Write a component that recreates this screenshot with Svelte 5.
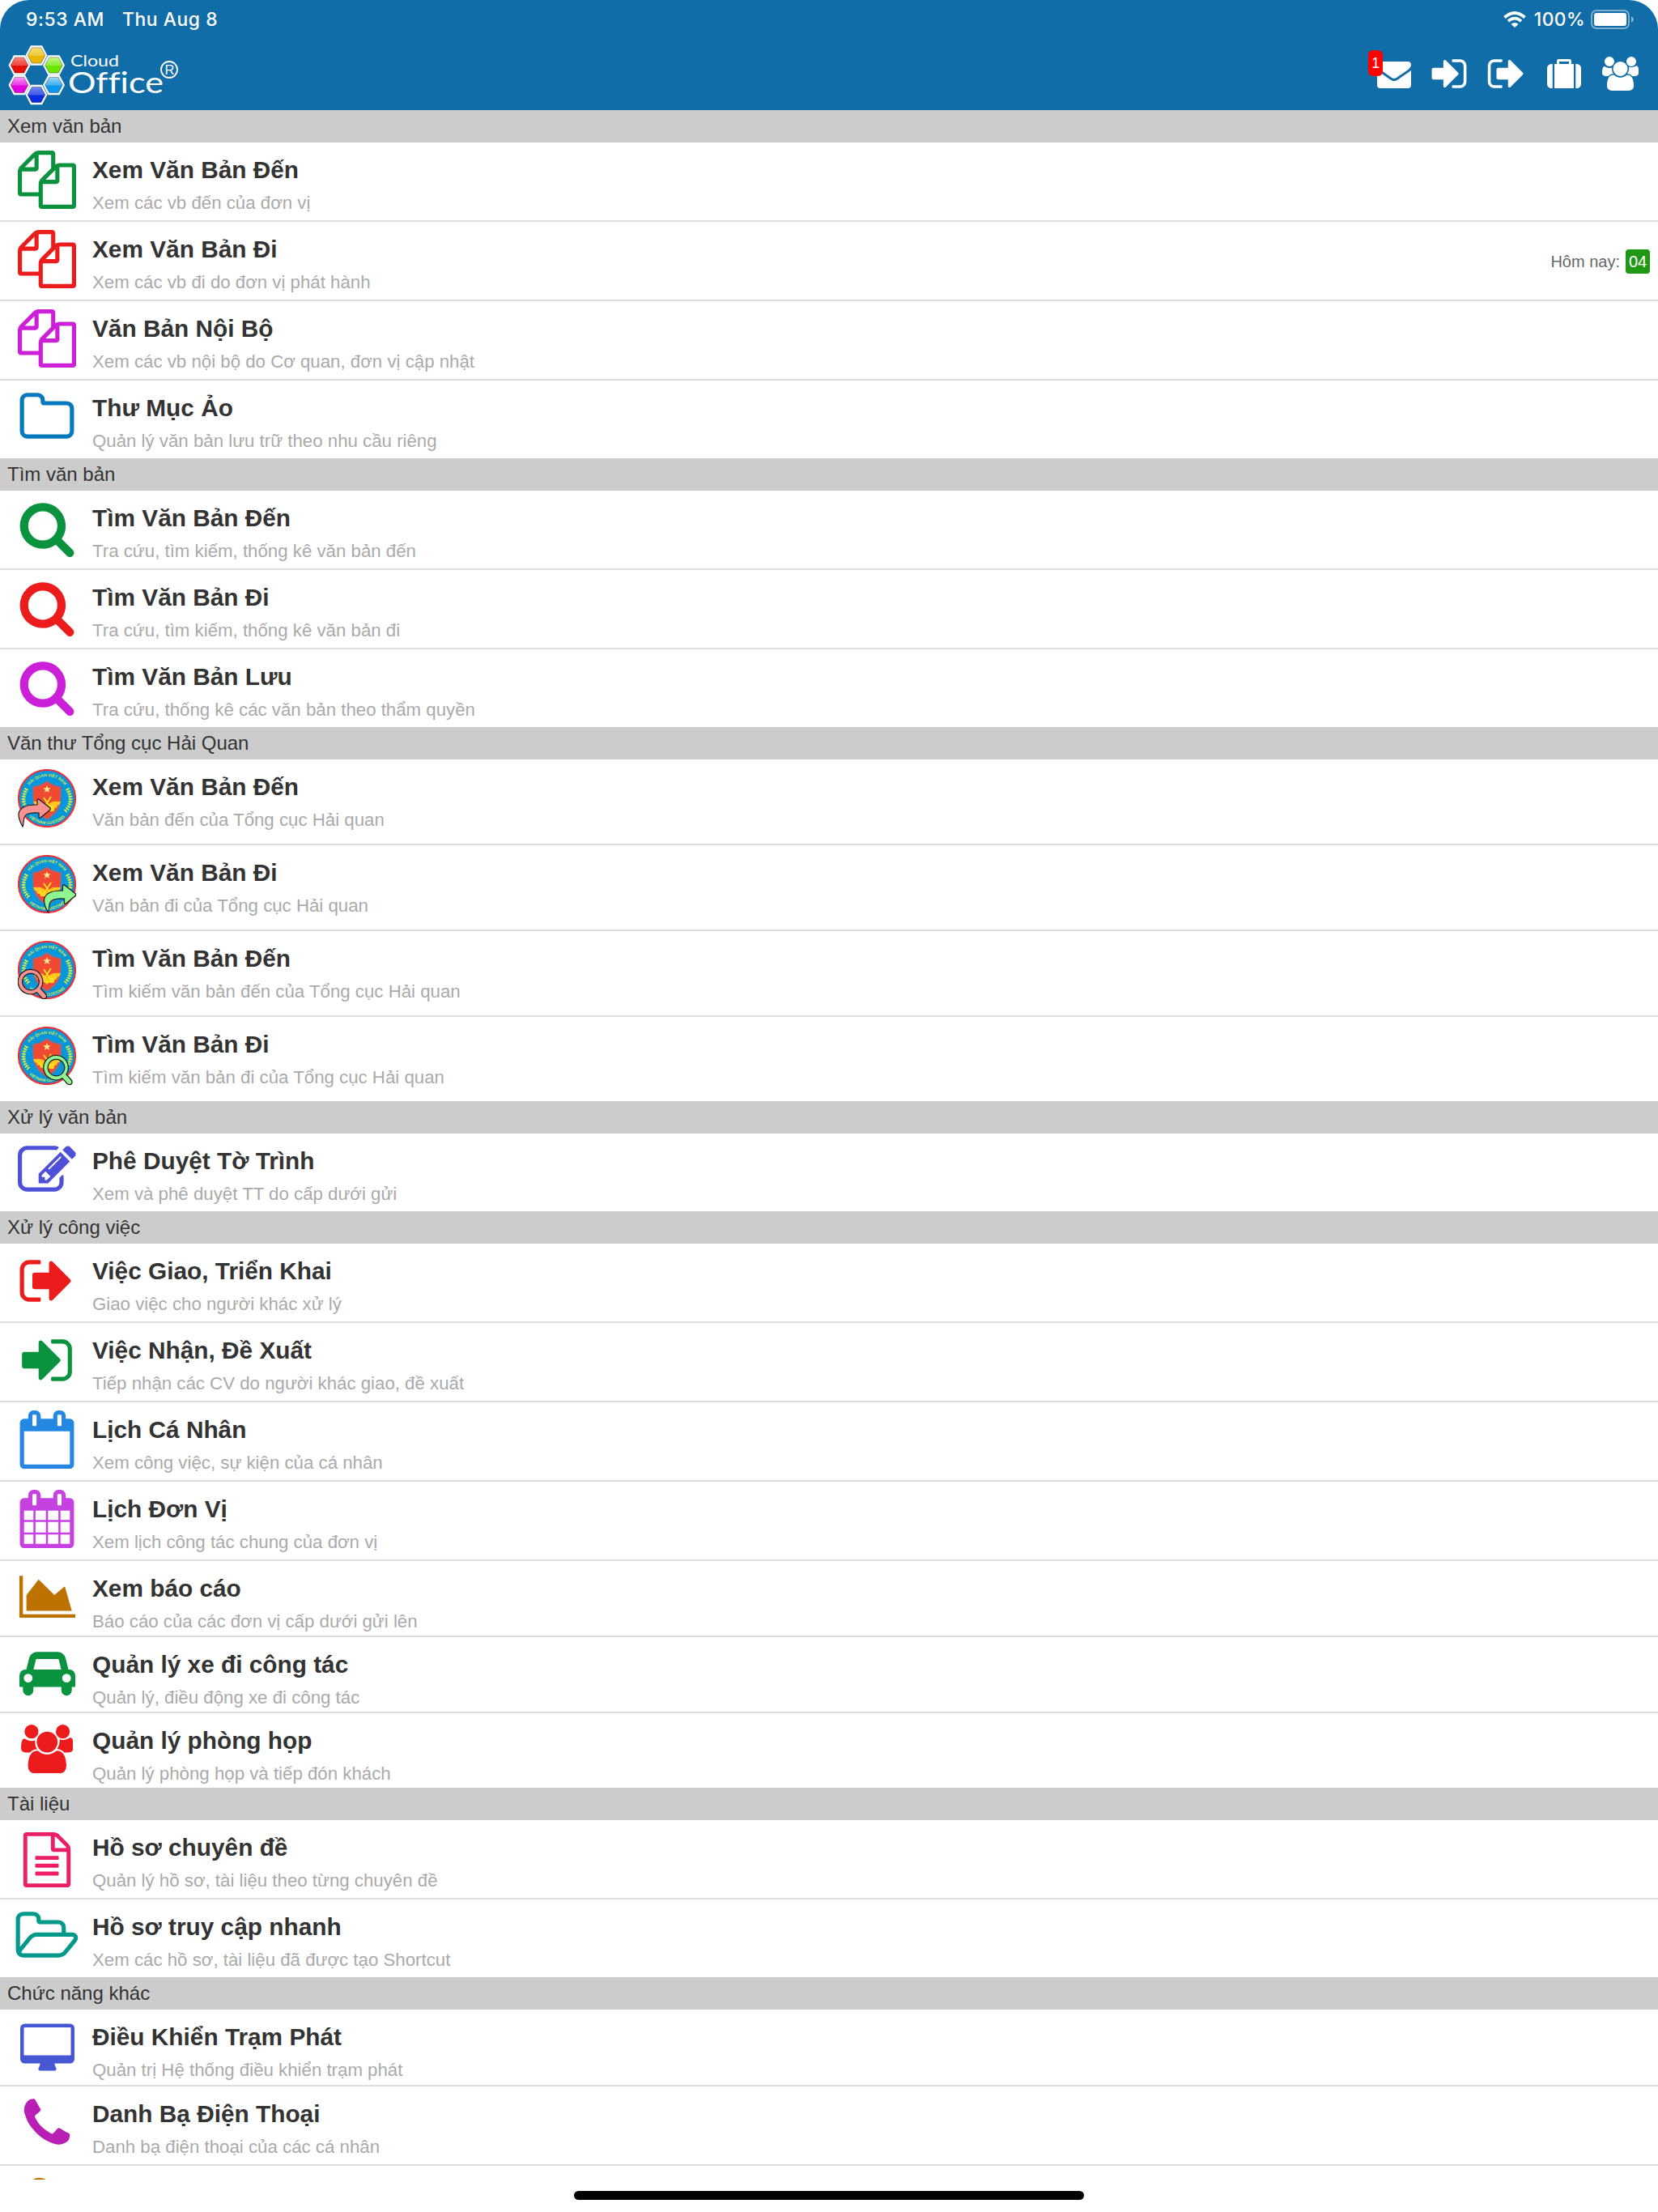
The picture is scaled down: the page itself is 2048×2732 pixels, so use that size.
<script>
  const icons = {
    files: {
      box: "0 0 1792 1792",
      d: "M1696 384q40 0 68 28t28 68v1216q0 40-28 68t-68 28h-960q-40 0-68-28t-28-68v-288h-544q-40 0-68-28t-28-68v-672q0-40 20-88t48-76l408-408q28-28 76-48t88-20h416q40 0 68 28t28 68v328q68-40 128-40h416zm-544 213l-299 299h299v-299zm-640-384l-299 299h299v-299zm196 647l316-316v-416h-384v416q0 40-28 68t-68 28h-416v640h512v-256q0-40 20-88t48-76zm956 804v-1152h-384v416q0 40-28 68t-68 28h-416v640h896z"
    },
    folder: {
      box: "0 0 1792 1792",
      d: "M1600 1312v-704q0-40-28-68t-68-28h-704q-40 0-68-28t-28-68v-64q0-40-28-68t-68-28h-320q-40 0-68 28t-28 68v960q0 40 28 68t68 28h1216q40 0 68-28t28-68zm128-704v704q0 92-66 158t-158 66h-1216q-92 0-158-66t-66-158v-960q0-92 66-158t158-66h320q92 0 158 66t66 158v32h672q92 0 158 66t66 158z"
    },
    search: {
      box: "0 0 1792 1792",
      d: "M1216 832q0-185-131.500-316.500t-316.500-131.500-316.500 131.500-131.500 316.500 131.500 316.500 316.500 131.500 316.500-131.500 131.500-316.500zm512 832q0 52-38 90t-90 38q-54 0-90-38l-343-342q-179 124-399 124-143 0-273.500-55.500t-225-150-150-225-55.500-273.500 55.500-273.500 150-225 225-150 273.500-55.500 273.500 55.500 225 150 150 225 55.500 273.500q0 220-124 399l343 343q37 37 37 90z"
    },
    edit: {
      box: "0 0 1792 1792",
      d: "M888 1184l116-116-152-152-116 116v56h96v96h56zm440-720q-16-16-33 1l-350 350q-17 17-1 33t33-1l350-350q17-17 1-33zm80 594v190q0 119-84.500 203.500t-203.500 84.500h-832q-119 0-203.500-84.500t-84.500-203.500v-832q0-119 84.500-203.500t203.500-84.500h832q63 0 117 25 15 7 18 23 3 17-9 29l-49 49q-14 14-32 8-23-6-45-6h-832q-66 0-113 47t-47 113v832q0 66 47 113t113 47h832q66 0 113-47t47-113v-126q0-13 9-22l64-64q15-15 35-7t20 29zm-96-738l288 288-672 672h-288v-288zm444 132l-92 92-288-288 92-92q28-28 68-28t68 28l152 152q28 28 28 68t-28 68z"
    },
    signOut: {
      box: "0 0 1792 1792",
      d: "M704 1440q0 4 1 20t.5 26.500-3 23.500-10 19.500-20.500 6.500h-320q-119 0-203.500-84.500t-84.500-203.500v-704q0-119 84.500-203.500t203.500-84.500h320q13 0 22.500 9.500t9.500 22.500q0 4 1 20t.5 26.500-3 23.500-10 19.500-20.500 6.500h-320q-66 0-113 47t-47 113v704q0 66 47 113t113 47h312l11.500 1 11.500 3 8 5.500 7 9 2 13.500zm928-544q0 26-19 45l-544 544q-19 19-45 19t-45-19-19-45v-288h-448q-26 0-45-19t-19-45v-384q0-26 19-45t45-19h448v-288q0-26 19-45t45-19 45 19l544 544q19 19 19 45z"
    },
    signIn: {
      box: "0 0 1792 1792",
      d: "M1312 896q0 26-19 45l-544 544q-19 19-45 19t-45-19-19-45v-288h-448q-26 0-45-19t-19-45v-384q0-26 19-45t45-19h448v-288q0-26 19-45t45-19 45 19l544 544q19 19 19 45zm352-352v704q0 119-84.500 203.500t-203.500 84.500h-320q-13 0-22.500-9.500t-9.500-22.500q0-4-1-20t-.5-26.500 3-23.500 10-19.500 20.500-6.500h320q66 0 113-47t47-113v-704q0-66-47-113t-113-47h-312l-11.500-1-11.500-3-8-5.500-7-9-2-13.500q0-4-1-20t-.5-26.500 3-23.500 10-19.500 20.500-6.500h320q119 0 203.500 84.500t84.500 203.500z"
    },
    calendarBlank: {
      box: "0 0 1792 1792",
      d: "M192 1664h1408v-1024h-1408v1024zm384-1216v-288q0-13-9.500-22.500t-22.500-9.500h-64q-13 0-22.500 9.500t-9.500 22.500v288q0 13 9.500 22.500t22.500 9.500h64q13 0 22.500-9.500t9.500-22.500zm768 0v-288q0-13-9.500-22.500t-22.500-9.500h-64q-13 0-22.500 9.500t-9.500 22.500v288q0 13 9.500 22.500t22.500 9.500h64q13 0 22.500-9.500t9.500-22.500zm384-64v1280q0 52-38 90t-90 38h-1408q-52 0-90-38t-38-90v-1280q0-52 38-90t90-38h128v-96q0-66 47-113t113-47h64q66 0 113 47t47 113v96h384v-96q0-66 47-113t113-47h64q66 0 113 47t47 113v96h128q52 0 90 38t38 90z"
    },
    calendar: {
      box: "0 0 1792 1792",
      d: "M192 1664h288v-288h-288v288zm352 0h320v-288h-320v288zm-352-352h288v-320h-288v320zm352 0h320v-320h-320v320zm-352-384h288v-288h-288v288zm736 736h320v-288h-320v288zm-384-736h320v-288h-320v288zm768 736h288v-288h-288v288zm-384-352h320v-320h-320v320zm-352-864v-288q0-13-9.500-22.500t-22.500-9.500h-64q-13 0-22.500 9.500t-9.500 22.500v288q0 13 9.500 22.500t22.500 9.500h64q13 0 22.500-9.500t9.500-22.500zm736 864h288v-320h-288v320zm-384-384h320v-288h-320v288zm384 0h288v-288h-288v288zm32-480v-288q0-13-9.500-22.500t-22.500-9.500h-64q-13 0-22.500 9.500t-9.500 22.500v288q0 13 9.500 22.500t22.500 9.500h64q13 0 22.500-9.500t9.500-22.500zm384-64v1280q0 52-38 90t-90 38h-1408q-52 0-90-38t-38-90v-1280q0-52 38-90t90-38h128v-96q0-66 47-113t113-47h64q66 0 113 47t47 113v96h384v-96q0-66 47-113t113-47h64q66 0 113 47t47 113v96h128q52 0 90 38t38 90z"
    },
    chart: {
      box: "0 0 2048 1792",
      d: "M2048 1536v128h-2048v-1536h128v1408h1920zm-384-1024l256 896h-1664v-576l448-576 576 576z"
    },
    car: {
      box: "0 0 2048 1792",
      d: "M480 1088q0-66-47-113t-113-47-113 47-47 113 47 113 113 47 113-47 47-113zm36-320h1016l-89-357q-2-8-14-17.500t-21-9.500h-768q-9 0-21 9.500t-14 17.500zm1372 320q0-66-47-113t-113-47-113 47-47 113 47 113 113 47 113-47 47-113zm160-96v384q0 14-9 23t-23 9h-96v128q0 80-56 136t-136 56-136-56-56-136v-128h-1024v128q0 80-56 136t-136 56-136-56-56-136v-128h-96q-14 0-23-9t-9-23v-384q0-93 65.500-158.500t158.500-65.500h28l105-419q23-94 104-157.500t179-63.500h768q98 0 179 63.500t104 157.500l105 419h28q93 0 158.500 65.500t65.500 158.500z"
    },
    users: {
      box: "0 0 1920 1792",
      d: "M593 896q-162 5-265 128h-134q-82 0-138-40.500t-56-118.500q0-353 124-353 6 0 43.500 21t97.500 42.500 119 21.500q67 0 133-23-5 37-5 66 0 159 93 293zm1071 637q0 120-73 189.500t-194 69.500h-874q-121 0-194-69.500t-73-189.500q0-53 3.500-103.500t14-109 26.500-108.500 43-97.500 62-81 85.500-53.500 111.500-20q10 0 43 21.500t73 48 107 48 135 21.500 135-21.500 107-48 73-48 43-21.500q61 0 111.500 20t85.500 53.500 62 81 43 97.500 26.500 108.500 14 109 3.500 103.500zm-1024-1277q0 106-75 181t-181 75-181-75-75-181 75-181 181-75 181 75 75 181zm704 384q0 159-112.500 271.500t-271.500 112.500-271.500-112.500-112.500-271.500 112.500-271.500 271.500-112.500 271.500 112.500 112.500 271.500zm576 225q0 78-56 118.500t-138 40.500h-134q-103-123-265-128 93-134 93-293 0-29-5-66 66 23 133 23 59 0 119-21.500t97.500-42.500 43.500-21q124 0 124 353zm-128-609q0 106-75 181t-181 75-181-75-75-181 75-181 181-75 181 75 75 181z"
    },
    file: {
      box: "0 0 1536 1792",
      d: "M1468 380q28 28 48 76t20 88v1152q0 40-28 68t-68 28h-1344q-40 0-68-28t-28-68v-1600q0-40 28-68t68-28h896q40 0 88 20t76 48zm-444-244v376h376q-10-29-22-41l-313-313q-12-12-41-22zm384 1528v-1024h-416q-40 0-68-28t-28-68v-416h-768v1536h1280zm-1024-864q0-14 9-23t23-9h704q14 0 23 9t9 23v64q0 14-9 23t-23 9h-704q-14 0-23-9t-9-23v-64zm736 224q14 0 23 9t9 23v64q0 14-9 23t-23 9h-704q-14 0-23-9t-9-23v-64q0-14 9-23t23-9h704zm0 256q14 0 23 9t9 23v64q0 14-9 23t-23 9h-704q-14 0-23-9t-9-23v-64q0-14 9-23t23-9h704z"
    },
    folderOpen: {
      box: "0 0 2048 1792",
      d: "M1845 931q0-35-53-35h-1088q-40 0-85.500 21.500t-71.500 52.500l-294 363q-18 24-18 40 0 35 53 35h1088q40 0 86-22t71-53l294-363q18-22 18-39zm-1141-163h768v-160q0-40-28-68t-68-28h-576q-40 0-68-28t-28-68v-64q0-40-28-68t-68-28h-320q-40 0-68 28t-28 68v853l256-315q44-53 116-87.500t140-34.500zm1269 163q0 62-46 120l-295 363q-43 53-116 87.500t-140 34.500h-1088q-92 0-158-66t-66-158v-960q0-92 66-158t158-66h320q92 0 158 66t66 158v32h544q92 0 158 66t66 158v160h192q54 0 99 24.500t67 70.500q15 32 15 68z"
    },
    desktop: {
      box: "0 0 1920 1664",
      d: "M1792 1088v-928q0-13-9.500-22.500t-22.500-9.500h-1600q-13 0-22.500 9.500t-9.500 22.500v928q0 13 9.500 22.500t22.500 9.500h1600q13 0 22.500-9.500t9.500-22.500zm128-928v1088q0 66-47 113t-113 47h-544q0 37 16 77.500t32 71 16 43.500q0 26-19 45t-45 19h-512q-26 0-45-19t-19-45q0-14 16-44t32-70 16-78h-544q-66 0-113-47t-47-113v-1088q0-66 47-113t113-47h1600q66 0 113 47t47 113z"
    },
    phone: {
      box: "0 0 1792 1792",
      d: "M1600 1240q0 27-10 70.500t-21 68.500q-21 50-122 106-94 51-186 51-27 0-53-3.500t-57.500-12.500-47-14.500-55.500-20.500-49-18q-98-35-175-83-127-79-264-216t-216-264q-48-77-83-175-3-9-18-49t-20.500-55.500-14.500-47-12.500-57.500-3.500-53q0-92 51-186 56-101 106-122 25-11 68.500-21t70.500-10q14 0 21 3 18 6 53 76 11 19 30 54t35 63.500 31 53.500q3 4 17.500 25t21.500 35.500 7 28.500q0 20-28.500 50t-62 55-62 53-28.500 46q0 9 5 22.500t8.500 20.500 14 24 11.500 19q76 137 174 235t235 174q2 1 19 11.500t24 14 20.500 8.500 22.500 5q18 0 46-28.500t53-62 55-62 50-28.500q14 0 28.500 7t35.500 21.500 25 17.500q25 15 53.500 31t63.500 35 54 30q70 35 76 53 3 7 3 21z"
    },
    envelope: {
      box: "0 0 1792 1792",
      d: "M1792 710v794q0 66-47 113t-113 47h-1472q-66 0-113-47t-47-113v-794q44 49 101 87 362 246 497 345 57 42 92.500 65.500t94.500 48 110 24.500h2q51 0 110-24.500t94.500-48 92.500-65.500q170-123 498-345 57-39 100-87zm0-294q0 79-49 151t-122 123q-376 261-468 325-10 7-42.500 31t-54 38.500-52 32.500-57.500 27-50 9h-2q-23 0-50-9t-57.500-27-52-32.500-54-38.500-42.500-31q-91-64-262-182.500t-205-142.500q-62-42-117-115.500t-55-136.500q0-78 41.500-130t118.500-52h1472q65 0 112.500 47t47.500 113z"
    },
    suitcase: {
      box: "0 0 1792 1792",
      d: "M640 384h512v-128h-512v128zm-352 0v1280h-64q-92 0-158-66t-66-158v-832q0-92 66-158t158-66h64zm1120 0v1280h-1024v-1280h128v-160q0-40 28-68t68-28h576q40 0 68 28t28 68v160h128zm384 224v832q0 92-66 158t-158 66h-64v-1280h64q92 0 158 66t66 158z"
    },
    key: {
      box: "0 0 1792 1792",
      d: "M660 118a400 400 0 1 0 1 0z"
    }
  };

  const sections = [
    {
      name: "Xem văn bản",
      items: [
        { icon: "files", color: "#0b923f", title: "Xem Văn Bản Đến", note: "Xem các vb đến của đơn vị" },
        { icon: "files", color: "#ec1c1c", title: "Xem Văn Bản Đi", note: "Xem các vb đi do đơn vị phát hành", today: "04" },
        { icon: "files", color: "#cc1fd8", title: "Văn Bản Nội Bộ", note: "Xem các vb nội bộ do Cơ quan, đơn vị cập nhật" },
        { icon: "folder", color: "#0479bd", title: "Thư Mục Ảo", note: "Quản lý văn bản lưu trữ theo nhu cầu riêng" }
      ]
    },
    {
      name: "Tìm văn bản",
      items: [
        { icon: "search", color: "#0b923f", title: "Tìm Văn Bản Đến", note: "Tra cứu, tìm kiếm, thống kê văn bản đến" },
        { icon: "search", color: "#ec1c1c", title: "Tìm Văn Bản Đi", note: "Tra cứu, tìm kiếm, thống kê văn bản đi" },
        { icon: "search", color: "#cc1fd8", title: "Tìm Văn Bản Lưu", note: "Tra cứu, thống kê các văn bản theo thẩm quyền" }
      ]
    },
    {
      name: "Văn thư Tổng cục Hải Quan",
      items: [
        { emblem: "arrow", side: "in", title: "Xem Văn Bản Đến", note: "Văn bản đến của Tổng cục Hải quan" },
        { emblem: "arrow", side: "out", title: "Xem Văn Bản Đi", note: "Văn bản đi của Tổng cục Hải quan" },
        { emblem: "lens", side: "in", title: "Tìm Văn Bản Đến", note: "Tìm kiếm văn bản đến của Tổng cục Hải quan" },
        { emblem: "lens", side: "out", title: "Tìm Văn Bản Đi", note: "Tìm kiếm văn bản đi của Tổng cục Hải quan" }
      ]
    },
    {
      name: "Xử lý văn bản",
      items: [
        { icon: "edit", color: "#4e51d8", title: "Phê Duyệt Tờ Trình", note: "Xem và phê duyệt TT do cấp dưới gửi" }
      ]
    },
    {
      name: "Xử lý công việc",
      items: [
        { icon: "signOut", color: "#ec1c1c", title: "Việc Giao, Triển Khai", note: "Giao việc cho người khác xử lý" },
        { icon: "signIn", color: "#0b923f", title: "Việc Nhận, Đề Xuất", note: "Tiếp nhận các CV do người khác giao, đề xuất" },
        { icon: "calendarBlank", color: "#2487e2", title: "Lịch Cá Nhân", note: "Xem công việc, sự kiện của cá nhân" },
        { icon: "calendar", color: "#c642e0", title: "Lịch Đơn Vị", note: "Xem lịch công tác chung của đơn vị" },
        { icon: "chart", size: "short", color: "#bd7200", title: "Xem báo cáo", note: "Báo cáo của các đơn vị cấp dưới gửi lên" },
        { icon: "car", size: "short", color: "#0b923f", title: "Quản lý xe đi công tác", note: "Quản lý, điều động xe đi công tác" },
        { icon: "users", size: "short", color: "#ec1c1c", title: "Quản lý phòng họp", note: "Quản lý phòng họp và tiếp đón khách" }
      ]
    },
    {
      name: "Tài liệu",
      items: [
        { icon: "file", size: "doc", color: "#ec1f66", title: "Hồ sơ chuyên đề", note: "Quản lý hồ sơ, tài liệu theo từng chuyên đề" },
        { icon: "folderOpen", color: "#03998a", title: "Hồ sơ truy cập nhanh", note: "Xem các hồ sơ, tài liệu đã được tạo Shortcut" }
      ]
    },
    {
      name: "Chức năng khác",
      items: [
        { icon: "desktop", size: "wide", color: "#4657d4", title: "Điều Khiển Trạm Phát", note: "Quản trị Hệ thống điều khiển trạm phát" },
        { icon: "phone", color: "#b81fb4", title: "Danh Bạ Điện Thoại", note: "Danh bạ điện thoại của các cá nhân" },
        { icon: "key", color: "#bd7200", title: "", note: "" }
      ]
    }
  ];

  const cells = [
    { x: 39, y: 12.5, from: "#fbe27a", to: "#e8b800" },
    { x: 60.5, y: 24.5, from: "#c9ff8a", to: "#6be600" },
    { x: 60.5, y: 49, from: "#a5dcfa", to: "#0d97ea" },
    { x: 39, y: 61, from: "#6f8cf5", to: "#0a2be0" },
    { x: 18, y: 49, from: "#ff9dfb", to: "#e000e0" },
    { x: 18, y: 24.5, from: "#ff8f85", to: "#e60d05" }
  ];

  const hex = (x, y, w, h) =>
    [[-w, 0], [-w * 0.52, -h], [w * 0.52, -h], [w, 0], [w * 0.52, h], [-w * 0.52, h]]
      .map(p => `${x + p[0]},${y + p[1]}`)
      .join(" ");
</script>

{#snippet glyph(name)}
  <svg class="glyph {name}" viewBox={icons[name].box} fill="currentColor">
    <path d={icons[name].d} />
  </svg>
{/snippet}

{#snippet customs(kind, side)}
  <svg class="emblem" viewBox="0 0 72 72">
    <defs>
      <path id="ring-top" d="M9 36a27 27 0 0 1 54 0" />
      <path id="ring-bottom" d="M4 36a32 32 0 0 0 64 0" />
    </defs>
    <circle cx="36" cy="36" r="35" fill="#0596dc" stroke="#ee3138" stroke-width="2.2" />
    <path d="M36 15q8 6 17 7v12q0 18-17 28-17-10-17-28v-12q9-1 17-7z" fill="#f04a35" stroke="#9b6b84" stroke-width="1.5" />
    <path d="M36 20l1.300 3.200 3.300.2-2.600 2.100.9 3.300-2.900-1.900-2.900 1.900.9-3.300-2.600-2.100 3.300-.2z" fill="#ffe98a" />
    <path d="M19 40q8-1 12 1l5 4 5-4q4-2 12-1l-2 4-2 .5-1 3-3 .5-1 3h-5l-3 3-3-3h-5l-1-3-3-.5-1-3-2-.5z" fill="#fdc81c" />
    <path d="M32 35l8 12m1-13l-9 14M27 45q9 12 18 0" fill="none" stroke="#ffe21c" stroke-width="1.8" />
    <circle cx="42" cy="49" r="2.5" fill="none" stroke="#ffe21c" stroke-width="1.5" />
    <g fill="none" stroke="#d9ec3c">
      <path d="M11 24q-9 16 2.500 28" stroke-width="1" />
      <path d="M11 24q-9 16 2.500 28" stroke-width="5" stroke-dasharray="1.6 1.6" />
      <path d="M61 24q9 16-2.500 28" stroke-width="1" />
      <path d="M61 24q9 16-2.500 28" stroke-width="5" stroke-dasharray="1.6 1.6" />
    </g>
    <text class="ring-text"><textPath href="#ring-top" startOffset="50%" text-anchor="middle">HẢI QUAN VIỆT NAM</textPath></text>
    <text class="ring-text"><textPath href="#ring-bottom" startOffset="50%" text-anchor="middle">VIETNAM CUSTOMS</textPath></text>
    {#if kind === "arrow"}
      <path
        class="mark {side}"
        d="M6 71Q0 60 1.200 54Q4 43.500 24 44V38.500Q24 36 26.500 37.500L39.500 47.500Q41 49 39.500 50.500L28 60Q26 61 26 58.500V54Q8 52.500 7.500 62Q7 67 6 71z" />
    {:else}
      <path
        class="mark {side}"
        d="M16 35.300a15.300 15.300 0 1 0 7.500 28.400l6 6.800q3 2.500 5.300 0 1.800-2.300-.5-5l-6-6.500a15.300 15.300 0 0 0-12.300-23.700zm0 5a10.300 10.300 0 1 1-.1 0z"
        fill-rule="evenodd" />
    {/if}
  </svg>
{/snippet}

<div class="screen">
  <header>
    <div class="status">
      <div class="clock">
        <span>9:53 AM</span>
        <span>Thu Aug 8</span>
      </div>
      <div class="power">
        <svg class="wifi" viewBox="0 0 28 20" fill="none" stroke="#fff">
          <path d="M1.500 7.500q12.500-11 25 0" stroke-width="3.8" />
          <path d="M6 12.200q8-7 16 0" stroke-width="3.6" />
          <path d="M9.500 15.700q4.500-3.600 9 0l-4.500 4.300z" fill="#fff" stroke="none" />
        </svg>
        <span>100%</span>
        <svg class="battery" viewBox="0 0 54 24">
          <rect x="1" y="1" width="46" height="22" rx="6" fill="none" stroke="#fff" stroke-opacity=".45" stroke-width="2" />
          <rect x="4" y="4" width="40" height="16" rx="3" fill="#fff" />
          <path d="M50 8q6 4 0 8z" fill="#fff" fill-opacity=".5" />
        </svg>
      </div>
    </div>
    <div class="bar">
      <svg class="logo" viewBox="0 0 216 74">
        <defs>
          {#each cells as cell, i}
            <linearGradient id="cell{i}" x1="0" y1="0" x2="0" y2="1">
              <stop offset="0" stop-color={cell.from} />
              <stop offset=".5" stop-color={cell.to} stop-opacity=".75" />
              <stop offset=".55" stop-color={cell.to} />
              <stop offset="1" stop-color={cell.to} />
            </linearGradient>
          {/each}
        </defs>
        {#each cells as cell}
          <polygon points={hex(cell.x, cell.y, 13.5, 12.2)} fill="#fff" />
        {/each}
        {#each cells as cell, i}
          <polygon points={hex(cell.x, cell.y, 10.8, 9.6)} fill="url(#cell{i})" stroke="#000" stroke-opacity=".35" />
        {/each}
        <text x="81" y="25.5" class="cloud" textLength="60" lengthAdjust="spacingAndGlyphs">Cloud</text>
        <text x="78" y="59" class="office" textLength="118" lengthAdjust="spacingAndGlyphs">Office</text>
        <circle cx="203" cy="30" r="10" fill="none" stroke="#fff" stroke-width="1.8" />
        <text x="203.5" y="35.8" class="reg" text-anchor="middle">R</text>
      </svg>
      <nav>
        <span class="mail">
          {@render glyph("envelope")}
          <b>1</b>
        </span>
        <span class="big">{@render glyph("signIn")}</span>
        <span class="big">{@render glyph("signOut")}</span>
        <span class="case">{@render glyph("suitcase")}</span>
        <span class="people">{@render glyph("users")}</span>
      </nav>
    </div>
  </header>

  <main>
    {#each sections as section}
      <section>
        <h2>{section.name}</h2>
        <ul>
          {#each section.items as item}
            <li class={item.size} class:tall={item.emblem}>
              <div class="icon" style="color: {item.color}">
                {#if item.emblem}
                  {@render customs(item.emblem, item.side)}
                {:else}
                  {@render glyph(item.icon)}
                {/if}
              </div>
              <div class="text">
                <h3>{item.title}</h3>
                <p>{item.note}</p>
              </div>
              {#if item.today}
                <div class="today">Hôm nay: <span>{item.today}</span></div>
              {/if}
            </li>
          {/each}
        </ul>
      </section>
    {/each}
  </main>

  <footer>
    <i></i>
  </footer>
</div>

<style>
  :global(body) {
    margin: 0;
    background: #fff;
  }
  .screen {
    display: flex;
    flex-direction: column;
    width: 2048px;
    height: 2732px;
    overflow: hidden;
    background: #fff;
    color: #333;
    font-family: "Liberation Sans", Arial, sans-serif;
  }
  svg {
    display: block;
  }
  header {
    height: 136px;
    flex: none;
    background: #116da7;
    border-radius: 36px 36px 0 0;
    color: #fff;
  }
  .status {
    display: flex;
    justify-content: space-between;
    align-items: center;
    height: 48px;
    padding: 0 30px 0 32px;
    font: 500 22.8px/48px Inter, sans-serif;
  }
  .clock,
  .power {
    display: flex;
    align-items: center;
  }
  .clock {
    gap: 22px;
    letter-spacing: 0.6px;
  }
  .power {
    letter-spacing: 0.4px;
  }
  .wifi {
    width: 28px;
    height: 20px;
    margin-right: 10px;
  }
  .battery {
    width: 54px;
    height: 24px;
    margin-left: 7px;
    margin-right: -1px;
  }
  .bar {
    display: flex;
    justify-content: space-between;
    align-items: flex-start;
    height: 88px;
    padding: 0 24px 0 6px;
  }
  .logo {
    width: 216px;
    height: 74px;
    margin-top: 8px;
    fill: #fff;
  }
  .cloud,
  .office {
    font-family: Lato, "Liberation Sans", sans-serif;
    font-variant-ligatures: none;
  }
  .cloud {
    font-size: 20px;
  }
  .office {
    font-size: 37px;
  }
  .reg {
    font-size: 16.5px;
  }
  nav {
    display: flex;
    align-items: center;
    height: 50px;
    margin-top: 18px;
  }
  nav span {
    position: relative;
  }
  nav .glyph {
    width: 42px;
    height: 42px;
  }
  nav .big {
    margin-left: 21.5px;
  }
  nav .big .glyph {
    width: 50px;
    height: 50px;
  }
  nav .case {
    margin-left: 24.7px;
  }
  nav .people {
    margin-left: 26px;
  }
  nav .people .glyph {
    width: 45px;
  }
  .mail b {
    position: absolute;
    left: -11px;
    top: -8px;
    width: 18px;
    height: 32px;
    border-radius: 6px;
    background: #f00;
    font: 18px/32px "Liberation Sans", Arial, sans-serif;
    text-align: center;
  }
  main {
    height: 2556px;
    flex: none;
    overflow: hidden;
  }
  h2 {
    margin: 0;
    height: 40px;
    padding-left: 9px;
    background: #ccc;
    font-size: 24px;
    font-weight: normal;
    line-height: 39px;
  }
  ul {
    margin: 0;
    padding: 0;
    list-style: none;
  }
  li {
    display: flex;
    box-sizing: border-box;
    height: 98px;
    border-bottom: 2px solid #ddd;
  }
  li.tall {
    height: 106px;
  }
  li.short {
    height: 94px;
  }
  li.wide {
    height: 95px;
  }
  li:last-child {
    border-bottom: 0;
    height: 96px;
  }
  li.tall:last-child {
    height: 104px;
  }
  li.short:last-child {
    height: 92px;
  }
  .icon {
    display: flex;
    justify-content: center;
    align-items: flex-start;
    width: 98px;
    margin: 10px 7px 0 9px;
    flex: none;
  }
  .icon .glyph {
    width: 72px;
    height: 72px;
  }
  .icon .folderOpen {
    width: 82.3px;
  }
  .short .icon {
    margin-top: 14px;
  }
  .short .glyph {
    width: 69px;
    height: 60.4px;
  }
  .short .users {
    width: 64.5px;
  }
  .doc .icon {
    margin-top: 15px;
  }
  .doc .glyph {
    height: 68px;
  }
  .icon .desktop {
    width: 67px;
    height: 59px;
    margin-top: 6.5px;
  }
  .emblem {
    width: 72px;
    height: 72px;
    margin-top: 2px;
  }
  .ring-text {
    font: bold 5px "Liberation Sans", Arial, sans-serif;
    fill: #d9ec3c;
  }
  .mark {
    stroke: #1a1a1a;
    stroke-width: 1.2px;
  }
  .mark.in {
    fill: #f59393;
  }
  .mark.out {
    fill: #90f490;
    transform: translateX(31.5px);
  }
  .text {
    flex: 1;
  }
  h3,
  p {
    margin: 0;
    white-space: nowrap;
  }
  h3 {
    margin-top: 15px;
    font-size: 29.8px;
    line-height: 38px;
  }
  p {
    margin-top: 7px;
    font-size: 22.25px;
    line-height: 30px;
    color: #aaa;
  }
  .today {
    display: flex;
    align-items: center;
    height: 30px;
    margin: 34px 10px 0 0;
    gap: 7px;
    font-size: 20px;
    color: #666;
  }
  .today span {
    width: 30px;
    border-radius: 4px;
    background: #219716;
    color: #fff;
    line-height: 30px;
    text-align: center;
  }
  footer {
    display: flex;
    flex: 1;
    justify-content: center;
    background: #fff;
  }
  footer i {
    width: 630px;
    height: 11px;
    margin-top: 14px;
    border-radius: 6px;
    background: #000;
  }
</style>
